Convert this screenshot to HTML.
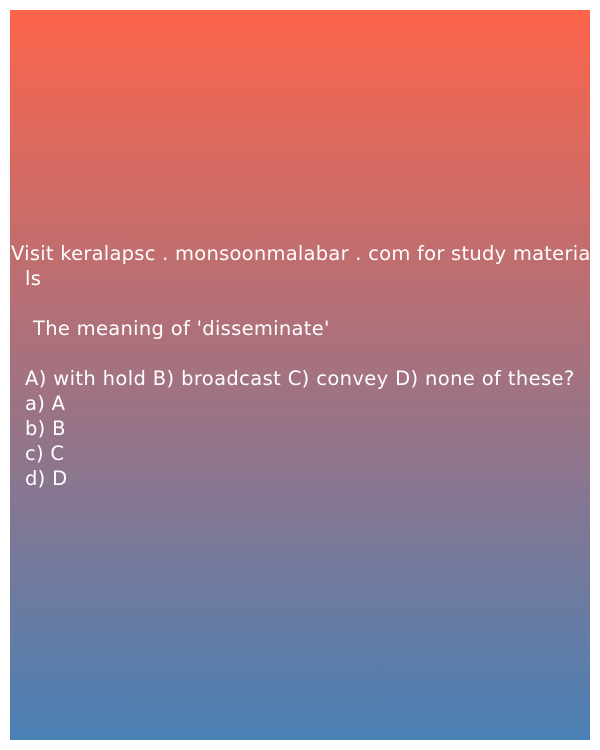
<!DOCTYPE html>
<html><head><style>
html,body{margin:0;padding:0;background:#fff;width:600px;height:750px;overflow:hidden}
.box{position:absolute;left:10px;top:10px;width:580px;height:730px;background:linear-gradient(to bottom,#fd644b 0%,#4a80b5 100%);}
.t{position:absolute;left:0;top:241px;width:600px;color:#fff;font-family:"DejaVu Sans",sans-serif;font-size:19.5px;line-height:25px;white-space:nowrap;letter-spacing:0.3px}
.t div{height:25px}
</style></head><body>
<div class="box"></div>
<div class="t"><div style="padding-left:11px;letter-spacing:0.25px">Visit keralapsc . monsoonmalabar . com for study materia</div><div style="padding-left:25px">ls</div><div></div><div style="padding-left:33px">The meaning of 'disseminate'</div><div></div><div style="padding-left:25px;letter-spacing:0.37px">A) with hold B) broadcast C) convey D) none of these?</div><div style="padding-left:25px">a) A</div><div style="padding-left:25px">b) B</div><div style="padding-left:25px">c) C</div><div style="padding-left:25px">d) D</div></div>
</body></html>
